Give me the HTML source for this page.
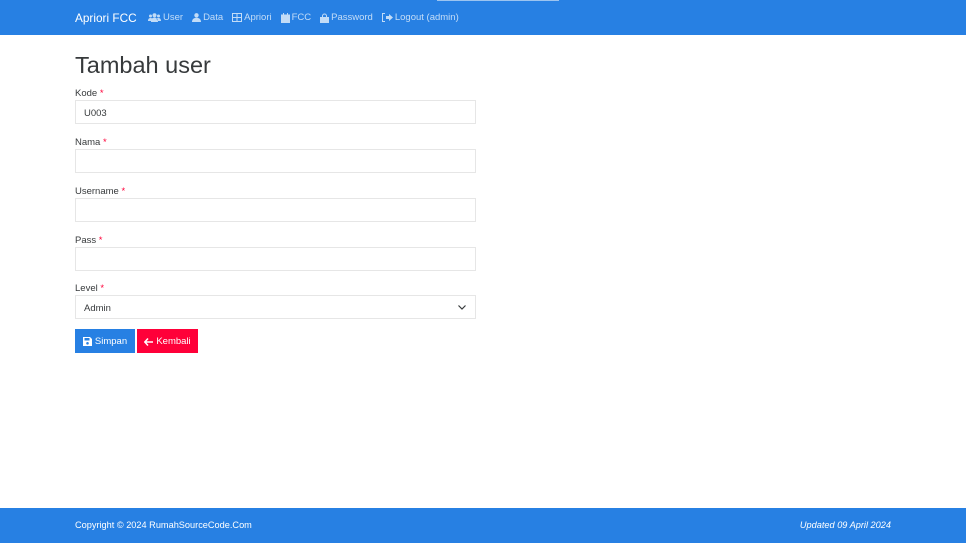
<!DOCTYPE html>
<html><head><meta charset="utf-8"><style>
*{box-sizing:border-box;margin:0;padding:0}
body{width:966px;height:543px;background:#fff;font-family:"Liberation Sans",sans-serif;position:relative;overflow:hidden;color:#373a3c}
.nav{position:absolute;left:0;top:0;width:966px;height:35px;background:#2780e3}
.brand{position:absolute;left:75px;top:11px;color:#fff;font-size:11.8px}
.links{position:absolute;left:148px;top:12px;font-size:9.5px;color:rgba(255,255,255,.72);display:flex;gap:9px;align-items:center}
.links span{display:flex;align-items:center;gap:2px}
.links svg{fill:rgba(255,255,255,.72)}
h1{position:absolute;left:75px;top:52px;font-size:23.5px;font-weight:normal;color:#373a3c}
.lab{position:absolute;left:75px;font-size:9.5px;color:#373a3c}
.lab b{color:#ff0039;font-weight:normal}
.inp{position:absolute;left:75px;width:401px;height:24px;border:1px solid #e6e6e6;font-size:9.5px;padding:7px 8px 0;color:#373a3c}
.btn{position:absolute;top:329px;height:24px;color:#fff;font-size:9.5px;display:flex;align-items:center;justify-content:center;gap:3px;padding-top:1px}
.foot{position:absolute;left:0;top:508px;width:966px;height:35px;background:#2780e3;color:#fff;font-size:9.2px}
</style></head><body>
<div class="nav">
<div style="position:absolute;left:437px;top:0;width:122px;height:1px;background:#9cc4f0"></div>
<div class="brand">Apriori FCC</div>
<div class="links">
<span><svg width="13" height="9" viewBox="0 0 13 9"><circle cx="6.5" cy="2.2" r="2"/><circle cx="2.5" cy="3" r="1.5"/><circle cx="10.5" cy="3" r="1.5"/><path d="M3 9c0-3 1.5-4.5 3.5-4.5S10 6 10 9zM0 8c0-2 1-3 2.5-3s2 .5 2 1L3 8zM13 8c0-2-1-3-2.5-3s-2 .5-2 1L10 8z"/></svg>User</span>
<span><svg width="9" height="9" viewBox="0 0 9 9"><circle cx="4.5" cy="2.3" r="2.2"/><path d="M0 9c0-3 2-4.3 4.5-4.3S9 6 9 9z"/></svg>Data</span>
<span><svg width="10" height="9" viewBox="0 0 10 9"><path d="M0 0h10v9H0zM1 1v3h3.5V1zM5.5 1v3H9V1zM1 5v3h3.5V5zM5.5 5v3H9V5z" fill-rule="evenodd"/></svg>Apriori</span>
<span><svg width="9" height="10" viewBox="0 0 9 10"><path d="M2 0h1v2H2zM6 0h1v2H6zM0 1.5h9V10H0z"/></svg>FCC</span>
<span><svg width="9" height="10" viewBox="0 0 9 10"><path d="M2 4V3a2.5 2.5 0 015 0v1H6V3a1.5 1.5 0 00-3 0v1zM0 4h9v6H0z"/></svg>Password</span>
<span><svg width="11" height="9" viewBox="0 0 11 9"><path d="M0 0h3v1H1v7h2v1H0z"/><path d="M4 3h3V1l4 3.5L7 8V6H4z"/></svg>Logout (admin)</span>
</div></div>
<h1>Tambah user</h1>
<div class="lab" style="top:88px">Kode <b>*</b></div><div class="inp" style="top:100px">U003</div>
<div class="lab" style="top:137px">Nama <b>*</b></div><div class="inp" style="top:149px"></div>
<div class="lab" style="top:186px">Username <b>*</b></div><div class="inp" style="top:198px"></div>
<div class="lab" style="top:235px">Pass <b>*</b></div><div class="inp" style="top:247px"></div>
<div class="lab" style="top:283px">Level <b>*</b></div><div class="inp" style="top:295px">Admin<svg style="position:absolute;right:9px;top:9px" width="8" height="5" viewBox="0 0 8 5"><path d="M.5.5L4 4 7.5.5" stroke="#373a3c" fill="none" stroke-width="1.2"/></svg></div>
<div class="btn" style="left:75px;width:60px;background:#2780e3"><svg width="9" height="9" viewBox="0 0 9 9"><path d="M0 0h7l2 2v7H0zM1.5 1v2.5h5V1zM4.5 5a1.3 1.3 0 100 2.6 1.3 1.3 0 000-2.6z" fill="#fff" fill-rule="evenodd"/></svg>Simpan</div>
<div class="btn" style="left:137px;width:61px;background:#ff0039"><svg width="9" height="8" viewBox="0 0 9 8"><path d="M4 .5L.8 4 4 7.5M1 4h8" stroke="#fff" stroke-width="1.5" fill="none"/></svg>Kembali</div>
<div class="foot"><span style="position:absolute;left:75px;top:12px">Copyright © 2024 RumahSourceCode.Com</span><span style="position:absolute;right:75px;top:12px;font-style:italic">Updated 09 April 2024</span></div>
</body></html>
